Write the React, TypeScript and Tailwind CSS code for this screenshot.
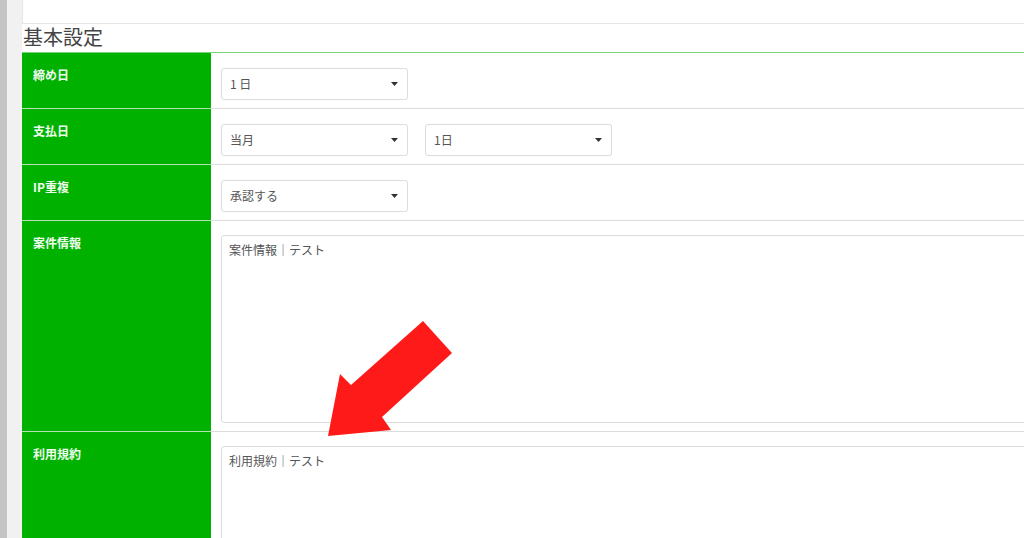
import React from "react";

const font = { fontFamily: '"Noto Sans CJK JP", "Noto Sans", sans-serif' };

function Caret() {
  return (
    <svg width="7" height="4" viewBox="0 0 7 4" className="shrink-0">
      <polygon points="0,0 7,0 3.5,4" fill="#333" />
    </svg>
  );
}

function Select({ value }: { value: string }) {
  return (
    <div className="flex h-[32px] w-[187px] items-center justify-between rounded-[3px] border border-[#dcdcdc] bg-white pl-[8px] pr-[9px] text-[12px] text-[#555]">
      <span>{value}</span>
      <Caret />
    </div>
  );
}

function Label({ text }: { text: string }) {
  return (
    <div className="border-b border-[#b5e3b5] bg-[#00b100] pl-[11px] pt-[13px] text-[12px] font-bold leading-[18px] text-[#eefcee]">
      {text}
    </div>
  );
}

function Cell({ children, h, pt }: { children: React.ReactNode; h: string; pt: string }) {
  return <div className={`border-b border-[#dcdcdc] pl-[10px] ${h} ${pt}`}>{children}</div>;
}

export default function App() {
  return (
    <div className="relative flex h-[538px] w-[1024px] overflow-hidden bg-white" style={font}>
      <div className="h-full w-[7px] shrink-0 bg-[#c4c4c4]" />
      <div className="h-full w-[15px] shrink-0 bg-[#f1f1f1]" />
      <div className="w-[1100px] shrink-0">
        <div className="h-[24px] border-b border-l border-[#e6e6e6] bg-white" />
        <div className="h-[28px] pl-[1px] text-[20px] leading-[26px] text-[#444]">基本設定</div>
        <div className="grid grid-cols-[189px_1fr] border-t border-[#77d477]">
          <Label text="締め日" />
          <Cell h="h-[56px]" pt="pt-[15px]">
            <Select value="1 日" />
          </Cell>
          <Label text="支払日" />
          <Cell h="h-[56px]" pt="pt-[15px]">
            <div className="flex gap-[17px]">
              <Select value="当月" />
              <Select value="1日" />
            </div>
          </Cell>
          <Label text="IP重複" />
          <Cell h="h-[56px]" pt="pt-[15px]">
            <Select value="承認する" />
          </Cell>
          <Label text="案件情報" />
          <Cell h="h-[211px]" pt="pt-[14px]">
            <div className="h-[188px] w-[900px] rounded-[3px] border border-[#dcdcdc] pl-[7px] pt-[5px] text-[12px] leading-[18px] text-[#555]">
              案件情報｜テスト
            </div>
          </Cell>
          <Label text="利用規約" />
          <Cell h="h-[200px]" pt="pt-[14px]">
            <div className="h-[188px] w-[900px] rounded-[3px] border border-[#dcdcdc] pl-[7px] pt-[5px] text-[12px] leading-[18px] text-[#555]">
              利用規約｜テスト
            </div>
          </Cell>
        </div>
      </div>
      <svg className="pointer-events-none absolute left-0 top-0" width="1024" height="538" viewBox="0 0 1024 538">
        <polygon
          points="328,436 340,374 351,385 423,321 452,353 382,417 391,430"
          fill="#ff1a1a"
        />
      </svg>
    </div>
  );
}
